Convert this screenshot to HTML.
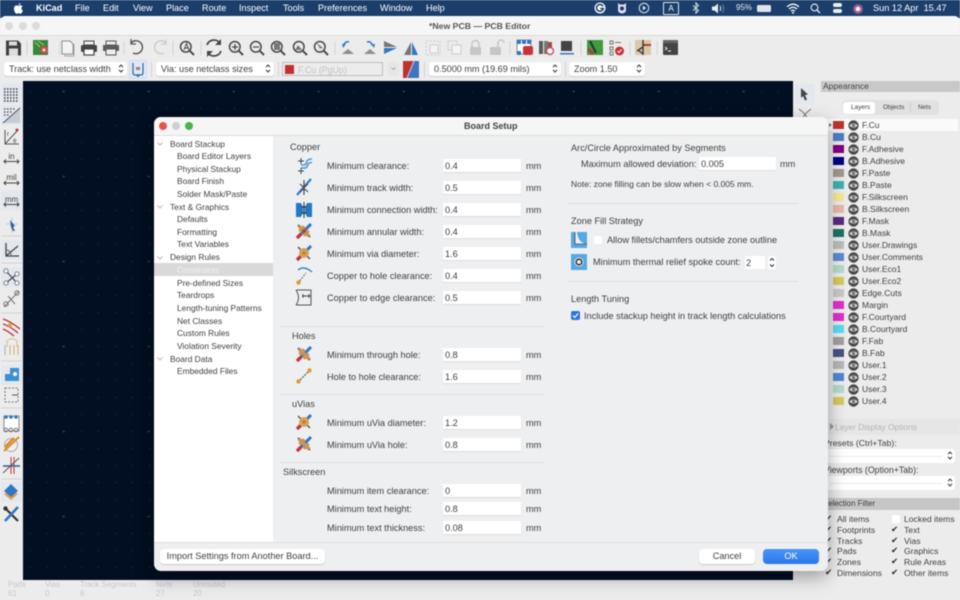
<!DOCTYPE html>
<html lang="en"><head><meta charset="utf-8"><title>KiCad Board Setup</title>
<style>
html,body{margin:0;padding:0;width:960px;height:600px;overflow:hidden;background:#ececec}
body{font-family:"Liberation Sans",sans-serif;color:#3f3f3f}
#w{position:absolute;left:0;top:0;width:960px;height:600px;overflow:hidden;filter:blur(.4px)}
.a{position:absolute}
.t{position:absolute;white-space:nowrap;font-size:9.2px;line-height:12px;height:12px}
.m{color:#fff;font-size:9.1px;top:1.5px}
.i{position:absolute;background:#fff;height:13px;width:78px;left:443px;font-size:9.2px;line-height:14px;text-indent:2px;box-shadow:0 1px 1px rgba(0,0,0,.08)}
.l{left:327px}.u{left:526px}
.h{font-size:9.2px}
.sep{position:absolute;height:1px;background:#dedede}
.tr{left:177px;font-size:8.4px}
.trh{left:170px;font-size:8.4px}
.chev{position:absolute;left:157px;width:6px;height:4px}
.cb{position:absolute;background:#fff;border-radius:3px;height:14px;top:62px;font-size:9.1px;line-height:14px;box-shadow:0 1px 1px rgba(0,0,0,.12)}
.sw{position:absolute;left:833px;width:11px;height:8px}
.eye{position:absolute;left:848px;width:11px;height:11px}
.ly{left:862px;font-size:8.5px}
.ck{position:absolute;font-size:9px;line-height:11px;color:#222}
.f{font-size:8.6px}
svg{position:absolute;overflow:visible}
</style></head><body><div id="w">
<svg width="0" height="0" style="position:absolute"><defs>
<symbol id="eye" viewBox="0 0 11 11"><circle cx="5.5" cy="5.5" r="5.2" fill="#4b4b4b"/><path d="M1.2 5.5Q5.5 1.4 9.800 5.5 5.500 9.600 1.200 5.500z" fill="#dcdcdc"/><circle cx="5.500" cy="5.500" r="1.500" fill="#666"/></symbol>
<symbol id="ud" viewBox="0 0 6 9"><path d="M1 3.200 3 1l2 2.200M1 5.800 3 8l2-2.200" fill="none" stroke="#333" stroke-width="1"/></symbol>
<symbol id="ch" viewBox="0 0 6 4"><path d="M.5.5 3 3 5.500.5" fill="none" stroke="#bbb" stroke-width="1"/></symbol>
<symbol id="zoom" viewBox="0 0 16 16"><circle cx="6.800" cy="6.800" r="5.300" fill="none" stroke="#4a4a4a" stroke-width="1.500"/><path d="M10.800 10.800 15 15" stroke="#4a4a4a" stroke-width="2"/></symbol>
<symbol id="cross" viewBox="0 0 16 16"><path d="M1 15 15 1" stroke="#2f78c4" stroke-width="3"/><path d="M1 15 5 11" stroke="#c8323a" stroke-width="3.400"/><path d="M2 2 14 14" stroke="#555" stroke-width="1.500"/><circle cx="8" cy="8" r="5" fill="#d8a058"/><circle cx="8" cy="8" r="1.800" fill="#b9803c"/></symbol>
<symbol id="cross2" viewBox="0 0 16 16"><path d="M1 15 15 1" stroke="#2f78c4" stroke-width="3"/><path d="M1 15 5 11" stroke="#c8323a" stroke-width="3.400"/><path d="M2 2 14 14" stroke="#555" stroke-width="1.800"/><path d="M3 3 13 13M3.500 8.500 8.500 3.500M7.500 12.500 12.500 7.500" stroke="#c8955a" stroke-width="3.500"/></symbol>
</defs></svg>

<!-- menu bar -->
<div class="a" style="left:0;top:0;width:960px;height:18px;background:#1b3e6b"></div>
<svg style="left:14px;top:3px" width="9" height="11" viewBox="0 0 9 11"><path d="M6.300 0C5.300.2 4.600 1 4.700 2.200 5.700 2.200 6.400 1.200 6.300 0zM4.500 2.800C3.800 2.800 3.200 2.300 2.500 2.400 1.100 2.500 0 3.700 0 5.700 0 8 1.500 10.800 2.800 10.800 3.500 10.800 3.800 10.300 4.600 10.300 5.400 10.300 5.600 10.800 6.300 10.800 7.500 10.800 8.500 8.800 8.900 7.600 7.100 6.800 7 4.300 8.600 3.400 7.900 2.500 6.900 2.300 6.300 2.400 5.500 2.400 5 2.800 4.500 2.800z" fill="#fff"/></svg>
<div class="t m" style="left:36px;font-weight:bold">KiCad</div>
<div class="t m" style="left:75px">File</div>
<div class="t m" style="left:103px">Edit</div>
<div class="t m" style="left:133px">View</div>
<div class="t m" style="left:166px">Place</div>
<div class="t m" style="left:202px">Route</div>
<div class="t m" style="left:239px">Inspect</div>
<div class="t m" style="left:283px">Tools</div>
<div class="t m" style="left:318px">Preferences</div>
<div class="t m" style="left:380px">Window</div>
<div class="t m" style="left:426px">Help</div>
<svg style="left:594px;top:2px" width="12" height="12" viewBox="0 0 12 12"><circle cx="6" cy="6" r="5.500" fill="#fff"/><path d="M9 4.300A3.400 3.400 0 1 0 9.300 6.500H6.300" fill="none" stroke="#1b3e6b" stroke-width="1.500"/></svg>
<svg style="left:617px;top:2px" width="10" height="12" viewBox="0 0 10 12"><path d="M1 1 3 2.500H7L9 1V8Q9 11 5 11.500 1 11 1 8z" fill="#dde"/><circle cx="5" cy="6.500" r="2" fill="#1b3e6b"/></svg>
<svg style="left:638px;top:2px" width="12" height="12" viewBox="0 0 12 12"><circle cx="6" cy="6" r="4.800" fill="none" stroke="#dfe6ee" stroke-width="1"/><path d="M4.800 3.800V8.200L8.200 6z" fill="#dfe6ee"/></svg>
<div class="a" style="left:663px;top:2px;width:14px;height:11px;border:1px solid #dfe6ee;color:#fff;font-size:8px;line-height:11px;text-align:center;border-radius:1px">A</div>
<svg style="left:692px;top:2px" width="8" height="12" viewBox="0 0 8 12"><path d="M1 3.500 6.500 8.500 4 11V1L6.500 3.500 1 8.500" fill="none" stroke="#cfd8e2" stroke-width="1.100"/></svg>
<svg style="left:712px;top:3px" width="14" height="11" viewBox="0 0 14 11"><path d="M0 3.500H2.500L6 .5V10.500L2.500 7.500H0z" fill="#e8edf2"/><path d="M8 3Q9.500 5.500 8 8" fill="none" stroke="#e8edf2"/><path d="M10.500 1.500Q13 5.500 10.500 9.500" fill="none" stroke="#6f88a6"/></svg>
<div class="t" style="left:736px;top:2px;color:#e8edf2;font-size:8px">95%</div>
<div class="a" style="left:757px;top:5px;width:14px;height:7px;background:#dfe5ec;border-radius:1.500px"></div>
<svg style="left:786px;top:3px" width="14" height="11" viewBox="0 0 14 11"><path d="M1 3.800Q7-1.500 13 3.800M3 6Q7 2.500 11 6M5 8Q7 6.500 9 8" fill="none" stroke="#fff" stroke-width="1.300"/><circle cx="7" cy="9.800" r="1" fill="#fff"/></svg>
<svg style="left:810px;top:3px" width="11" height="11" viewBox="0 0 11 11"><circle cx="4.500" cy="4.500" r="3.400" fill="none" stroke="#e8edf2" stroke-width="1.100"/><path d="M7 7 10 10" stroke="#e8edf2" stroke-width="1.300"/></svg>
<div class="a" style="left:833px;top:3px;width:9px;height:4px;background:#e8edf2;border-radius:2px"></div>
<div class="a" style="left:833px;top:9px;width:9px;height:4px;background:#e8edf2;border-radius:2px"></div>
<div class="a" style="left:853px;top:4px;width:10px;height:10px;border-radius:50%;background:radial-gradient(circle,#fff 20%,#b0457a 45%,#3f88a8 85%)"></div>
<div class="t m" style="left:873px;top:1.500px;font-size:9.200px">Sun 12 Apr&nbsp; 15.47</div>

<!-- window chrome -->
<div class="a" style="left:0;top:16px;width:960px;height:584px;background:#ececec;border-radius:6px 6px 0 0"></div>
<div class="a" style="left:0;top:16px;width:960px;height:19px;background:#f6f6f6;border-radius:6px 6px 0 0;border-bottom:1px solid #dcdcdc"></div>
<div class="a" style="left:5px;top:22px;width:8px;height:8px;border-radius:50%;background:#dcdcdc"></div>
<div class="a" style="left:19px;top:22px;width:8px;height:8px;border-radius:50%;background:#dcdcdc"></div>
<div class="a" style="left:32px;top:22px;width:8px;height:8px;border-radius:50%;background:#dcdcdc"></div>
<div class="t" style="left:429px;top:19.500px;font-size:8.700px;font-weight:bold;color:#555">*New PCB — PCB Editor</div>

<!-- toolbar -->
<svg style="left:0;top:36.500px" width="960" height="24" viewBox="0 36 960 24">
<path d="M6 39.500H18L21 42.500V54.500H6z" fill="#3f3f3f"/><rect x="9" y="40.500" width="8" height="4" fill="#ddd"/><rect x="9" y="47.500" width="9" height="7" fill="#ddd"/>
<path d="M27 40V54M60 40V54M124 40V54M173 40V54M201 40V54M335 40V54M510 40V54M581 40V54M630 40V54M657 40V54" stroke="#d4d4d4"/>
<rect x="33" y="39" width="15" height="15" fill="#35883c"/><circle cx="44" cy="49" r="4" fill="#c94b4b"/><circle cx="44" cy="49" r="1.500" fill="#eee"/><path d="M35 41 40 46M38 40 44 44" stroke="#a6cf5c"/>
<path d="M62 40H70L73 43V53H62z" fill="#f4f4f4" stroke="#8e8e8e"/><path d="M65 53V55H74V43" fill="none" stroke="#a5a5a5"/>
<rect x="84" y="40" width="10" height="4" fill="none" stroke="#444"/><rect x="81" y="44" width="16" height="7" rx="1.500" fill="#444"/><rect x="84" y="48" width="10" height="6" fill="#fff" stroke="#444" stroke-width="1.200"/>
<rect x="106" y="40" width="10" height="4" fill="none" stroke="#555"/><rect x="103" y="44" width="16" height="6" fill="#5c5c5c"/><rect x="106" y="48" width="10" height="6" fill="#eee" stroke="#555"/>
<path d="M131 42A6.500 6.500 0 1 1 133 52" fill="none" stroke="#555" stroke-width="1.400"/><path d="M131 38V43H136" fill="none" stroke="#555" stroke-width="1.300"/>
<path d="M166 42A6.500 6.500 0 1 0 164 52" fill="none" stroke="#ccc" stroke-width="1.400"/><path d="M166 38V43H161" fill="none" stroke="#ccc" stroke-width="1.300"/>
<use href="#zoom" x="179" y="39" width="16" height="16"/><path d="M184 49 186.500 42.500 189 49M185 47H188" stroke="#444" fill="none"/>
<path d="M207 44A7.500 7.500 0 0 1 220 42M221 50A7.500 7.500 0 0 1 208 52" fill="none" stroke="#444" stroke-width="1.700"/><path d="M221 38V44H215M207 56V50H213" fill="#444"/>
<use href="#zoom" x="228" y="39" width="16" height="16"/><path d="M232 46H238M235 43V49" stroke="#444" stroke-width="1.200"/>
<use href="#zoom" x="249" y="39" width="16" height="16"/><path d="M253 46H259" stroke="#444" stroke-width="1.200"/>
<use href="#zoom" x="270" y="39" width="16" height="16"/><rect x="274" y="42" width="6" height="7" fill="#777"/>
<use href="#zoom" x="292" y="39" width="16" height="16"/><path d="M295 49 298 44 302 49z" fill="#777"/>
<use href="#zoom" x="313" y="39" width="16" height="16"/><path d="M317 42 323 47 320 47.500 321 50z" fill="#777"/>
<path d="M342 53 354 53 348 48z" fill="#8f8f8f"/><path d="M344 44Q345 40 349 41" fill="none" stroke="#2f78c4" stroke-width="1.500"/><path d="M343 47 346 43 342 43z" fill="#2f78c4"/>
<path d="M364 53H376L370 48z" fill="#8f8f8f"/><path d="M372 44Q371 40 367 41" fill="none" stroke="#2f78c4" stroke-width="1.500"/><path d="M374 47 371 43 375 43z" fill="#2f78c4"/>
<path d="M384 40 397 46H384z" fill="#777"/><path d="M384 47H397L384 53z" fill="#2f78c4"/>
<path d="M411 41V54H404z" fill="#777"/><path d="M412 41V54H418z" fill="#2f78c4"/>
<rect x="426" y="40" width="14" height="14" fill="none" stroke="#ccc" stroke-dasharray="2 1.500"/><rect x="430" y="44" width="8" height="8" fill="#f4f4f4" stroke="#ccc"/>
<rect x="448" y="40" width="9" height="9" fill="none" stroke="#d0d0d0"/><rect x="452" y="44" width="9" height="9" fill="#f4f4f4" stroke="#ccc"/>
<rect x="470" y="46" width="11" height="8" rx="1" fill="#c6c6c6"/><path d="M472 46V43A3.500 3.500 0 0 1 479 43V46" fill="none" stroke="#c6c6c6" stroke-width="1.500"/>
<rect x="490" y="46" width="11" height="8" rx="1" fill="#c6c6c6"/><path d="M498 46V42A3 3 0 0 1 504 42" fill="none" stroke="#c6c6c6" stroke-width="1.500"/>
<rect x="517" y="39" width="14" height="14" fill="#fff" stroke="#8a8a8a"/><rect x="517" y="39" width="4" height="4" rx="1" fill="#2f78c4"/><rect x="522" y="39" width="4" height="4" rx="1" fill="#2f78c4"/><rect x="527" y="39" width="4" height="4" rx="1" fill="#2f78c4"/><rect x="517" y="50" width="4" height="4" rx="1" fill="#2f78c4"/><rect x="523" y="45" width="10" height="9" rx="2" fill="#c8323a"/>
<rect x="539" y="40" width="4" height="13" fill="#5a5a5a"/><rect x="544" y="40" width="4" height="13" fill="#777"/><rect x="548" y="41" width="4" height="12" fill="#a24a4f"/><circle cx="550" cy="50" r="3.500" fill="#f4f4f4" stroke="#c04050" stroke-width="1.200"/>
<rect x="561" y="40" width="11" height="10" fill="#444"/><rect x="560" y="52" width="14" height="1.500" fill="#2f78c4"/>
<rect x="587" y="39" width="16" height="15" fill="#3f9b3f"/><path d="M590 40 596 52" stroke="#333" stroke-width="2"/><path d="M588 48 593 53" stroke="#c03040" stroke-width="3"/>
<rect x="610" y="40" width="3" height="3" fill="none" stroke="#777"/><rect x="610" y="46" width="3" height="3" fill="none" stroke="#777"/><rect x="610" y="51" width="3" height="3" fill="none" stroke="#777"/><path d="M615 41.500H621" stroke="#777"/><circle cx="619.500" cy="50" r="4.500" fill="#c8323a"/><path d="M617.500 50 619 51.500 621.500 48.500" stroke="#fff" fill="none"/>
<rect x="635" y="39" width="16" height="15" fill="#d9c9a8"/><path d="M643 39V54M637 50 643 46M643 44H651M638 49 643 53" stroke="#3a3a3a" stroke-width="1.400"/><path d="M645 44H651" stroke="#c8323a" stroke-width="2"/>
<rect x="663" y="39" width="15" height="15" rx="1" fill="#444"/><rect x="663" y="39" width="15" height="3" fill="#666"/><path d="M665 46 667 47.500 665 49M668 50H671" stroke="#eee" fill="none"/>
</svg>

<!-- aux bar -->
<div class="a" style="left:0;top:60px;width:960px;height:21px;background:#ececec"></div>
<div class="cb" style="left:4px;width:123px;text-indent:5px">Track: use netclass width</div>
<svg style="left:118px;top:64px" width="6" height="9"><use href="#ud" width="6" height="9"/></svg>
<div class="a" style="left:129px;top:60px;width:18px;height:19px;background:#dfe9f5;border:1px solid #cfdcec;box-sizing:border-box"></div>
<svg style="left:131px;top:62px" width="14" height="16" viewBox="0 0 14 16"><path d="M2 1V11Q2 13 4 13H10Q12 13 12 11V1" fill="none" stroke="#3a6aa8" stroke-width="1.300"/><rect x="5" y="5" width="4" height="3" fill="#888"/><circle cx="7" cy="13.500" r="1.500" fill="#2f78c4"/></svg>
<div class="a" style="left:151px;top:62px;width:1px;height:15px;background:#d4d4d4"></div>
<div class="cb" style="left:156px;width:118px;text-indent:5px">Via: use netclass sizes</div>
<svg style="left:265px;top:64px" width="6" height="9"><use href="#ud" width="6" height="9"/></svg>
<div class="a" style="left:278px;top:62px;width:1px;height:15px;background:#d4d4d4"></div>
<div class="a" style="left:282px;top:62px;width:101px;height:14px;background:#ececec;border:1px solid #bdbdbd;box-sizing:border-box"></div>
<div class="a" style="left:285px;top:65px;width:9px;height:9px;background:#c0302f"></div>
<div class="t" style="left:298px;top:63.500px;color:#c2c2c2;font-size:8.900px">F.Cu (PgUp)</div>
<div class="a" style="left:388px;top:62px;width:11px;height:14px;background:#e6e6e6;border-radius:3px"></div>
<svg style="left:391px;top:67px" width="5" height="4"><path d="M.5.5 2.500 2.500 4.500.5" fill="none" stroke="#aaa"/></svg>
<svg style="left:403px;top:61px" width="16" height="17" viewBox="0 0 16 17"><rect width="16" height="17" fill="#3f73c4"/><path d="M0 0H11L4 17H0z" fill="#c0302f"/><path d="M11 0 4 17" stroke="#ccc" stroke-width="1"/></svg>
<div class="a" style="left:424px;top:62px;width:1px;height:15px;background:#d4d4d4"></div>
<div class="cb" style="left:429px;width:132px;text-indent:5px">0.5000 mm (19.69 mils)</div>
<svg style="left:552px;top:64px" width="6" height="9"><use href="#ud" width="6" height="9"/></svg>
<div class="a" style="left:565px;top:62px;width:1px;height:15px;background:#d4d4d4"></div>
<div class="cb" style="left:569px;width:76px;text-indent:5px">Zoom 1.50</div>
<svg style="left:636px;top:64px" width="6" height="9"><use href="#ud" width="6" height="9"/></svg>

<!-- canvas -->
<div class="a" style="left:23px;top:81px;width:770px;height:499px;background-color:#020e21;background-image:radial-gradient(circle,#33465e .7px,transparent 1px),radial-gradient(circle,#1a2a40 .6px,transparent .9px);background-size:85px 85px,17px 17px;background-position:-2px -32px,-1px 2px"></div>

<!-- left toolbar -->
<svg style="left:0;top:81px" width="23" height="499" viewBox="0 81 23 499">
<rect x="1" y="83" width="21" height="20" fill="#e3e8ef"/>
<path d="M4 89H19M4 92H19M4 95H19M4 98H19M4 101H19" stroke="#3a3a3a" stroke-width="1.400" stroke-dasharray="1.500 1.500"/>
<rect x="1" y="105" width="21" height="20" fill="#e3e8ef"/>
<path d="M4 109H16M4 112H13M4 115H9" stroke="#444" stroke-width="1.300" stroke-dasharray="1.500 1.500"/><path d="M3 123 20 108V123z" fill="#c6ccd4"/><path d="M3 123 20 108" stroke="#555"/>
<path d="M5 130V144H19" fill="none" stroke="#555"/><path d="M5 144 17 131" stroke="#555"/><circle cx="17" cy="130" r="1.500" fill="#c8323a"/>
<text x="7" y="136" font-family="Liberation Sans" font-size="6" fill="#444">r</text><text x="13" y="143" font-family="Liberation Sans" font-size="6" fill="#444">θ</text>
<text x="11.500" y="159" text-anchor="middle" font-family="Liberation Sans" font-size="8" fill="#444">in</text>
<path d="M4 161.500H19M6 159.500 4 161.500 6 163.500M17 159.500 19 161.500 17 163.500" fill="none" stroke="#444"/>
<text x="11.500" y="180" text-anchor="middle" font-family="Liberation Sans" font-size="8" fill="#444">mil</text>
<path d="M4 183H19M6 181 4 183 6 185M17 181 19 183 17 185" fill="none" stroke="#444"/>
<rect x="1" y="190" width="21" height="20" fill="#e3e8ef"/>
<text x="11.500" y="202" text-anchor="middle" font-family="Liberation Sans" font-size="8" fill="#444">mm</text>
<path d="M4 204.500H19M6 202.500 4 204.500 6 206.500M17 202.500 19 204.500 17 206.500" fill="none" stroke="#444"/>
<path d="M12 217V233M6 224H18" stroke="#c9d7e6" stroke-width="1.500"/><path d="M10 220 15 226 13 227 15 231 13 231 11 227z" fill="#2f5f96"/>
<path d="M1 236H22" stroke="#d2d2d2"/>
<rect x="1" y="240" width="21" height="20" fill="#e3e8ef"/>
<path d="M6 243V256H19M6 256 18 246" fill="none" stroke="#444" stroke-width="1.300"/><path d="M6 250Q11 250 11 256" fill="none" stroke="#666"/>
<path d="M1 263H22" stroke="#d2d2d2"/>
<rect x="1" y="267" width="21" height="20" fill="#e3e8ef"/>
<path d="M6 271 17 283M6 283 17 274" stroke="#445" stroke-width="1.200"/><circle cx="6" cy="271" r="2.200" fill="#eef" stroke="#555" stroke-width=".7"/><circle cx="17" cy="274" r="2.200" fill="#eef" stroke="#555" stroke-width=".7"/><circle cx="6" cy="283" r="2.200" fill="#eef" stroke="#555" stroke-width=".7"/><circle cx="17" cy="283" r="2.200" fill="#eef" stroke="#555" stroke-width=".7"/>
<path d="M4 307 19 291" stroke="#777" stroke-width="1"/><circle cx="6" cy="304" r="2.200" fill="none" stroke="#777"/><circle cx="17" cy="293" r="2.200" fill="none" stroke="#777"/><path d="M8 296 15 304" stroke="#777"/>
<path d="M1 313H22" stroke="#d2d2d2"/>
<path d="M3 319Q10 321 20 329M3 324Q10 326 18 333M3 329Q8 331 14 336" fill="none" stroke="#b33a3a" stroke-width="1.400"/><circle cx="10" cy="325" r="2" fill="#e2a83c"/>
<path d="M7 347V341A7 7 0 0 1 17 341V347" fill="none" stroke="#d5c48a"/><path d="M10 355V345M14 355V345M18 355V345" stroke="#d5b070"/><path d="M5 355V345" stroke="#8cb3db"/>
<path d="M1 361H22" stroke="#d2d2d2"/>
<rect x="1" y="365" width="21" height="20" fill="#e3e8ef"/>
<path d="M5 381V374H10V368H19V381z" fill="#3d8fd3"/><circle cx="15" cy="374" r="2" fill="#fff"/>
<rect x="5" y="388" width="13" height="14" fill="none" stroke="#777" stroke-dasharray="2 1.500"/><path d="M12 395H18" stroke="#555"/>
<path d="M1 408H22" stroke="#d2d2d2"/>
<rect x="4" y="416" width="15" height="15" fill="#fff" stroke="#888"/><circle cx="6" cy="417" r="1.800" fill="#2f78c4"/><circle cx="11" cy="417" r="1.800" fill="#2f78c4"/><circle cx="16" cy="417" r="1.800" fill="#2f78c4"/><circle cx="6" cy="430" r="1.800" fill="none" stroke="#777"/><circle cx="11" cy="430" r="1.800" fill="none" stroke="#777"/><circle cx="16" cy="430" r="1.800" fill="none" stroke="#777"/>
<circle cx="11" cy="445" r="6.500" fill="#eee" stroke="#aaa"/><path d="M4 451 19 437" stroke="#d98d2e" stroke-width="2"/><path d="M5 447 14 438" stroke="#d98d2e" stroke-width="2.500"/>
<path d="M11 457V474M14 457V474" stroke="#c8323a"/><path d="M3 466H20" stroke="#2f5f96" stroke-width="1.400"/><path d="M3 473 19 458" stroke="#555"/>
<path d="M1 479H22" stroke="#d2d2d2"/>
<rect x="1" y="482" width="21" height="20" fill="#e3e8ef"/>
<path d="M11 490 18 494 11 500 4 494z" fill="#e0a040"/><path d="M11 484 18 491 11 497 4 491z" fill="#2f78c4"/>
<path d="M5 508 18 521" stroke="#333" stroke-width="2.200"/><circle cx="5.500" cy="508.500" r="2.200" fill="#333"/><path d="M18 507 5 521" stroke="#2f78c4" stroke-width="2.600"/>
</svg>

<!-- right toolbar -->
<div class="a" style="left:795px;top:84px;width:20px;height:20px;background:#e3e8ef"></div>
<svg style="left:800px;top:87px" width="10" height="14" viewBox="0 0 10 14"><path d="M1 1 8 7.500 5 8 7 12.500 5 13.500 3 9 1 11z" fill="#444"/></svg>
<svg style="left:798px;top:108px" width="14" height="10" viewBox="0 0 14 10"><path d="M1 1 7 6 13 1M7 6 5 10M7 6 9 10" fill="none" stroke="#777"/></svg>

<!-- appearance panel -->
<div class="a" style="left:821px;top:81px;width:139px;height:11px;background:#c8c8c8"></div>
<div class="t" style="left:823px;top:80px;font-size:8.500px;color:#444">Appearance</div>
<div class="a" style="left:842px;top:100px;width:97px;height:15px;background:#e1e1e1;border-radius:4px"></div>
<div class="a" style="left:843px;top:101.500px;width:32px;height:12.500px;background:#fff;border-radius:3px"></div>
<div class="t" style="left:851px;top:101.500px;font-size:6.400px">Layers</div>
<div class="t" style="left:883px;top:101.500px;font-size:6.300px">Objects</div>
<div class="t" style="left:918px;top:101.500px;font-size:6.300px">Nets</div>
<div class="a" style="left:910px;top:103px;width:1px;height:9px;background:#cfcfcf"></div>
<div class="a" style="left:826px;top:119px;width:132px;height:12px;background:#fafafa"></div>
<svg style="left:829px;top:123px" width="3" height="4"><path d="M0 0 3 2 0 4z" fill="#777"/></svg>

<div class="sw" style="top:121px;background:#c0342f"></div><svg class="eye" style="top:120px"><use href="#eye" width="11" height="11"/></svg><div class="t ly" style="top:119px">F.Cu</div>
<div class="sw" style="top:133px;background:#4d7fc4"></div><svg class="eye" style="top:132px"><use href="#eye" width="11" height="11"/></svg><div class="t ly" style="top:131px">B.Cu</div>
<div class="sw" style="top:145px;background:#840084"></div><svg class="eye" style="top:144px"><use href="#eye" width="11" height="11"/></svg><div class="t ly" style="top:143px">F.Adhesive</div>
<div class="sw" style="top:157px;background:#000084"></div><svg class="eye" style="top:156px"><use href="#eye" width="11" height="11"/></svg><div class="t ly" style="top:155px">B.Adhesive</div>
<div class="sw" style="top:169px;background:#a2988e"></div><svg class="eye" style="top:168px"><use href="#eye" width="11" height="11"/></svg><div class="t ly" style="top:167px">F.Paste</div>
<div class="sw" style="top:181px;background:#3fb0ae"></div><svg class="eye" style="top:180px"><use href="#eye" width="11" height="11"/></svg><div class="t ly" style="top:179px">B.Paste</div>
<div class="sw" style="top:193px;background:#f2ea90"></div><svg class="eye" style="top:192px"><use href="#eye" width="11" height="11"/></svg><div class="t ly" style="top:191px">F.Silkscreen</div>
<div class="sw" style="top:205px;background:#e8b8ac"></div><svg class="eye" style="top:204px"><use href="#eye" width="11" height="11"/></svg><div class="t ly" style="top:203px">B.Silkscreen</div>
<div class="sw" style="top:217px;background:#582c80"></div><svg class="eye" style="top:216px"><use href="#eye" width="11" height="11"/></svg><div class="t ly" style="top:215px">F.Mask</div>
<div class="sw" style="top:229px;background:#1d7262"></div><svg class="eye" style="top:228px"><use href="#eye" width="11" height="11"/></svg><div class="t ly" style="top:227px">B.Mask</div>
<div class="sw" style="top:241px;background:#bcbcbc"></div><svg class="eye" style="top:240px"><use href="#eye" width="11" height="11"/></svg><div class="t ly" style="top:239px">User.Drawings</div>
<div class="sw" style="top:253px;background:#5b8ad0"></div><svg class="eye" style="top:252px"><use href="#eye" width="11" height="11"/></svg><div class="t ly" style="top:251px">User.Comments</div>
<div class="sw" style="top:265px;background:#b4dccd"></div><svg class="eye" style="top:264px"><use href="#eye" width="11" height="11"/></svg><div class="t ly" style="top:263px">User.Eco1</div>
<div class="sw" style="top:277px;background:#d6c95e"></div><svg class="eye" style="top:276px"><use href="#eye" width="11" height="11"/></svg><div class="t ly" style="top:275px">User.Eco2</div>
<div class="sw" style="top:289px;background:#c8cac8"></div><svg class="eye" style="top:288px"><use href="#eye" width="11" height="11"/></svg><div class="t ly" style="top:287px">Edge.Cuts</div>
<div class="sw" style="top:301px;background:#e030cc"></div><svg class="eye" style="top:300px"><use href="#eye" width="11" height="11"/></svg><div class="t ly" style="top:299px">Margin</div>
<div class="sw" style="top:313px;background:#e030cc"></div><svg class="eye" style="top:312px"><use href="#eye" width="11" height="11"/></svg><div class="t ly" style="top:311px">F.Courtyard</div>
<div class="sw" style="top:325px;background:#58dcf0"></div><svg class="eye" style="top:324px"><use href="#eye" width="11" height="11"/></svg><div class="t ly" style="top:323px">B.Courtyard</div>
<div class="sw" style="top:337px;background:#a0a0a0"></div><svg class="eye" style="top:336px"><use href="#eye" width="11" height="11"/></svg><div class="t ly" style="top:335px">F.Fab</div>
<div class="sw" style="top:349px;background:#475280"></div><svg class="eye" style="top:348px"><use href="#eye" width="11" height="11"/></svg><div class="t ly" style="top:347px">B.Fab</div>
<div class="sw" style="top:361px;background:#b6b6b6"></div><svg class="eye" style="top:360px"><use href="#eye" width="11" height="11"/></svg><div class="t ly" style="top:359px">User.1</div>
<div class="sw" style="top:373px;background:#5085d4"></div><svg class="eye" style="top:372px"><use href="#eye" width="11" height="11"/></svg><div class="t ly" style="top:371px">User.2</div>
<div class="sw" style="top:385px;background:#b4dccd"></div><svg class="eye" style="top:384px"><use href="#eye" width="11" height="11"/></svg><div class="t ly" style="top:383px">User.3</div>
<div class="sw" style="top:397px;background:#d6c95e"></div><svg class="eye" style="top:396px"><use href="#eye" width="11" height="11"/></svg><div class="t ly" style="top:395px">User.4</div>

<div class="a" style="left:826px;top:419px;width:134px;height:16px;background:#e6e6e6"></div>
<svg style="left:830px;top:423px" width="4" height="7"><path d="M0 0 4 3.500 0 7z" fill="#999"/></svg>
<div class="t" style="left:835px;top:421px;font-size:8.400px;color:#b4b4b4">Layer Display Options</div>
<div class="t" style="left:824px;top:437px;font-size:8.700px">Presets (Ctrl+Tab):</div>
<div class="a" style="left:826px;top:449px;width:129px;height:13.500px;background:#fff;border-radius:3px"></div>
<div class="a" style="left:830px;top:456px;width:112px;height:1px;background:#eaeaea"></div>
<svg style="left:947px;top:451px" width="6" height="9"><use href="#ud" width="6" height="9"/></svg>
<div class="t" style="left:824px;top:464px;font-size:8.800px">Viewports (Option+Tab):</div>
<div class="a" style="left:826px;top:476px;width:129px;height:13.500px;background:#fff;border-radius:3px"></div>
<div class="a" style="left:830px;top:483px;width:112px;height:1px;background:#eaeaea"></div>
<svg style="left:947px;top:478px" width="6" height="9"><use href="#ud" width="6" height="9"/></svg>
<div class="a" style="left:820px;top:498px;width:140px;height:11.500px;background:#c6c6c6"></div>
<div class="t" style="left:823px;top:498px;font-size:7.900px">Selection Filter</div>

<div class="ck f" style="left:825px;top:513px">✔</div><div class="t f" style="left:837px;top:513px">All items</div>
<div class="ck f" style="left:825px;top:523.500px">✔</div><div class="t f" style="left:837px;top:523.500px">Footprints</div>
<div class="ck f" style="left:825px;top:534.500px">✔</div><div class="t f" style="left:837px;top:534.500px">Tracks</div>
<div class="ck f" style="left:825px;top:545px">✔</div><div class="t f" style="left:837px;top:545px">Pads</div>
<div class="ck f" style="left:825px;top:555.500px">✔</div><div class="t f" style="left:837px;top:555.500px">Zones</div>
<div class="ck f" style="left:825px;top:566.500px">✔</div><div class="t f" style="left:837px;top:566.500px">Dimensions</div>
<div class="a" style="left:892px;top:515px;width:8px;height:8px;background:#fff;border-radius:2px"></div><div class="t f" style="left:904px;top:513px">Locked items</div>
<div class="ck f" style="left:891px;top:523.500px">✔</div><div class="t f" style="left:904px;top:523.500px">Text</div>
<div class="ck f" style="left:891px;top:534.500px">✔</div><div class="t f" style="left:904px;top:534.500px">Vias</div>
<div class="ck f" style="left:891px;top:545px">✔</div><div class="t f" style="left:904px;top:545px">Graphics</div>
<div class="ck f" style="left:891px;top:555.500px">✔</div><div class="t f" style="left:904px;top:555.500px">Rule Areas</div>
<div class="ck f" style="left:891px;top:566.500px">✔</div><div class="t f" style="left:904px;top:566.500px">Other items</div>

<!-- status bar -->
<div class="t" style="left:8px;top:579px;font-size:7.800px;color:#c8c8c8">Pads</div><div class="t" style="left:8px;top:588px;font-size:7.800px;color:#c8c8c8">61</div>
<div class="t" style="left:45px;top:579px;font-size:7.800px;color:#c8c8c8">Vias</div><div class="t" style="left:45px;top:588px;font-size:7.800px;color:#c8c8c8">0</div>
<div class="t" style="left:80px;top:579px;font-size:7.800px;color:#c8c8c8">Track Segments</div><div class="t" style="left:80px;top:588px;font-size:7.800px;color:#c8c8c8">6</div>
<div class="t" style="left:156px;top:579px;font-size:7.800px;color:#c8c8c8">Nets</div><div class="t" style="left:156px;top:588px;font-size:7.800px;color:#c8c8c8">27</div>
<div class="t" style="left:193px;top:579px;font-size:7.800px;color:#c8c8c8">Unrouted</div><div class="t" style="left:193px;top:588px;font-size:7.800px;color:#c8c8c8">20</div>

<!-- dialog -->
<div class="a" style="left:154px;top:117px;width:674px;height:454px;background:#eeeff0;border-radius:7px;box-shadow:0 6px 18px rgba(0,0,0,.35)"></div>
<div class="a" style="left:154px;top:117px;width:674px;height:18px;background:#f6f6f6;border-radius:7px 7px 0 0;border-bottom:1px solid #dedede"></div>
<div class="a" style="left:159px;top:122px;width:8px;height:8px;border-radius:50%;background:#e9524a"></div>
<div class="a" style="left:172px;top:122px;width:8px;height:8px;border-radius:50%;background:#cfcfcf"></div>
<div class="a" style="left:185px;top:122px;width:8px;height:8px;border-radius:50%;background:#44b649"></div>
<div class="t" style="left:464px;top:120px;font-size:9px;font-weight:bold;color:#444">Board Setup</div>
<div class="a" style="left:154px;top:136px;width:119px;height:406px;background:#fff"></div>
<div class="a" style="left:154px;top:263px;width:119px;height:13px;background:#d9d9d9"></div>
<div class="a" style="left:154px;top:542px;width:674px;height:1px;background:#dedede"></div>

<svg class="chev" style="top:142px"><use href="#ch" width="6" height="4"/></svg>
<svg class="chev" style="top:205px"><use href="#ch" width="6" height="4"/></svg>
<svg class="chev" style="top:256px"><use href="#ch" width="6" height="4"/></svg>
<svg class="chev" style="top:357px"><use href="#ch" width="6" height="4"/></svg>
<div class="t trh" style="top:137.500px">Board Stackup</div>
<div class="t tr" style="top:150px">Board Editor Layers</div>
<div class="t tr" style="top:163px">Physical Stackup</div>
<div class="t tr" style="top:175px">Board Finish</div>
<div class="t tr" style="top:188px">Solder Mask/Paste</div>
<div class="t trh" style="top:201px">Text &amp; Graphics</div>
<div class="t tr" style="top:213px">Defaults</div>
<div class="t tr" style="top:226px">Formatting</div>
<div class="t tr" style="top:238px">Text Variables</div>
<div class="t trh" style="top:251px">Design Rules</div>
<div class="t tr" style="top:264px;color:#f2f2f2">Constraints</div>
<div class="t tr" style="top:277px">Pre-defined Sizes</div>
<div class="t tr" style="top:289px">Teardrops</div>
<div class="t tr" style="top:302px">Length-tuning Patterns</div>
<div class="t tr" style="top:315px">Net Classes</div>
<div class="t tr" style="top:327px">Custom Rules</div>
<div class="t tr" style="top:340px">Violation Severity</div>
<div class="t trh" style="top:353px">Board Data</div>
<div class="t tr" style="top:365px">Embedded Files</div>

<!-- constraints -->
<div class="t h" style="left:290px;top:141px">Copper</div>
<div class="t l" style="top:159.500px">Minimum clearance:</div><div class="i" style="top:159px">0.4</div><div class="t u" style="top:160px">mm</div>
<div class="t l" style="top:181.500px">Minimum track width:</div><div class="i" style="top:181px">0.5</div><div class="t u" style="top:182px">mm</div>
<div class="t l" style="top:204px">Minimum connection width:</div><div class="i" style="top:203px">0.4</div><div class="t u" style="top:204px">mm</div>
<div class="t l" style="top:226px">Minimum annular width:</div><div class="i" style="top:225px">0.4</div><div class="t u" style="top:226px">mm</div>
<div class="t l" style="top:248px">Minimum via diameter:</div><div class="i" style="top:247px">1.6</div><div class="t u" style="top:248px">mm</div>
<div class="t l" style="top:270px">Copper to hole clearance:</div><div class="i" style="top:269px">0.4</div><div class="t u" style="top:270px">mm</div>
<div class="t l" style="top:292px">Copper to edge clearance:</div><div class="i" style="top:291px">0.5</div><div class="t u" style="top:292px">mm</div>
<div class="sep" style="left:280px;top:326px;width:263px"></div>
<div class="t h" style="left:292px;top:330px">Holes</div>
<div class="t l" style="top:348.500px">Minimum through hole:</div><div class="i" style="top:348px">0.8</div><div class="t u" style="top:349px">mm</div>
<div class="t l" style="top:370.500px">Hole to hole clearance:</div><div class="i" style="top:370px">1.6</div><div class="t u" style="top:371px">mm</div>
<div class="sep" style="left:280px;top:394px;width:263px"></div>
<div class="t h" style="left:292px;top:398px">uVias</div>
<div class="t l" style="top:417px">Minimum uVia diameter:</div><div class="i" style="top:416px">1.2</div><div class="t u" style="top:417px">mm</div>
<div class="t l" style="top:439px">Minimum uVia hole:</div><div class="i" style="top:438px">0.8</div><div class="t u" style="top:439px">mm</div>
<div class="sep" style="left:280px;top:462px;width:263px"></div>
<div class="t h" style="left:283px;top:465.500px">Silkscreen</div>
<div class="t l" style="top:485px">Minimum item clearance:</div><div class="i" style="top:484px">0</div><div class="t u" style="top:485px">mm</div>
<div class="t l" style="top:503px">Minimum text height:</div><div class="i" style="top:502px">0.8</div><div class="t u" style="top:503px">mm</div>
<div class="t l" style="top:522px">Minimum text thickness:</div><div class="i" style="top:521px">0.08</div><div class="t u" style="top:522px">mm</div>

<!-- constraint icons -->
<svg style="left:296px;top:157px" width="16" height="150" viewBox="0 0 16 150">
<path d="M5 8H8Q10 8 11 4 12 2 16 2M5 11H9Q11 11 12 7 13 5.500 16 5.500" fill="none" stroke="#4f9ad6" stroke-width="1.600"/><path d="M5 1V7M2 4H8M5 11V17M2 14H8" stroke="#444" stroke-width="1"/>
<path d="M1 38 15 22" stroke="#3f7fc8" stroke-width="2.400"/><path d="M8 23V38M4 27 8 30.500 12 27M4 35 8 31.500 12 35" fill="none" stroke="#444" stroke-width="1.100"/>
<path d="M0 46H5L7 51V55L5 60H0zM16 46H11L9 51V55L11 60H16z" fill="#1f78c8"/><path d="M8 45V61M6 49 8 51 10 49M6 57 8 55 10 57" fill="none" stroke="#333"/>
<use href="#cross2" x="0" y="66" width="16" height="16"/><circle cx="8" cy="74" r="2" fill="#b04535"/>
<use href="#cross" x="0" y="88" width="16" height="16"/>
<path d="M2 113Q8 108 16 115" fill="none" stroke="#2f78c4" stroke-width="1.300"/><path d="M2 126 10 116" stroke="#444" stroke-dasharray="1.500 1.500"/><circle cx="2.500" cy="125.500" r="2.200" fill="#dd9a30"/>
<path d="M0 133H15V148H0M0 133Q5 141 0 148" fill="none" stroke="#555"/><path d="M6 139H15M7 137V141M13 137V141" stroke="#444" stroke-width=".9"/>
</svg>
<svg style="left:296px;top:346px" width="16" height="16"><use href="#cross2" width="16" height="16"/></svg>
<svg style="left:296px;top:368px" width="16" height="16" viewBox="0 0 16 16"><path d="M2 14 14 2" stroke="#444" stroke-dasharray="2 1"/><circle cx="2.500" cy="13.500" r="2.200" fill="#dd9a30"/><circle cx="13.500" cy="2.500" r="2.200" fill="#dd9a30"/></svg>
<svg style="left:296px;top:414px" width="16" height="16"><use href="#cross" width="16" height="16"/></svg>
<svg style="left:296px;top:436px" width="16" height="16"><use href="#cross2" width="16" height="16"/></svg>

<!-- right column -->
<div class="t h" style="left:571px;top:141.500px">Arc/Circle Approximated by Segments</div>
<div class="t" style="left:581px;top:157.500px">Maximum allowed deviation:</div>
<div class="i" style="left:699px;width:77px;top:157px">0.005</div>
<div class="t" style="left:780px;top:157.500px">mm</div>
<div class="t" style="left:571px;top:177.500px;font-size:8.500px">Note: zone filling can be slow when &lt; 0.005 mm.</div>
<div class="sep" style="left:568px;top:203px;width:230px"></div>
<div class="t h" style="left:571px;top:215px">Zone Fill Strategy</div>
<svg style="left:571px;top:232px" width="16" height="16" viewBox="0 0 16 16"><rect width="16" height="16" fill="#55a8e4"/><path d="M4 0V12H16Q7 11 6 0z" fill="#f0f0f0"/><path d="M4 0V12H16" fill="none" stroke="#3a4a5a" stroke-width=".8"/></svg>
<div class="a" style="left:594px;top:236px;width:8px;height:8px;background:#fff;border-radius:2px"></div>
<div class="t" style="left:607px;top:233.500px">Allow fillets/chamfers outside zone outline</div>
<svg style="left:571px;top:254px" width="16" height="16" viewBox="0 0 16 16"><rect width="16" height="16" fill="#55a8e4"/><circle cx="8" cy="8" r="4.500" fill="#f2f2f2"/><circle cx="8" cy="8" r="2.800" fill="none" stroke="#333" stroke-width="1.600"/></svg>
<div class="t" style="left:593px;top:256px">Minimum thermal relief spoke count:</div>
<div class="a" style="left:745px;top:255.500px;width:20px;height:13px;background:#fff;font-size:9.200px;line-height:14px;text-indent:1px">2</div>
<svg style="left:768px;top:255.500px" width="8" height="13" viewBox="0 0 8 13"><rect width="8" height="13" rx="2" fill="#fff"/><path d="M2 4.500 4 2.500 6 4.500M2 8.500 4 10.500 6 8.500" fill="none" stroke="#333"/></svg>
<div class="sep" style="left:568px;top:281px;width:230px"></div>
<div class="t h" style="left:571px;top:293px">Length Tuning</div>
<svg style="left:571px;top:311px" width="9" height="9" viewBox="0 0 9 9"><rect width="9" height="9" rx="2" fill="#2d74e2"/><path d="M2 4.500 3.800 6.500 7 2.500" fill="none" stroke="#fff" stroke-width="1.200"/></svg>
<div class="t" style="left:584px;top:310px">Include stackup height in track length calculations</div>

<!-- buttons -->
<div class="a" style="left:160px;top:549px;width:165px;height:15px;background:#fff;border-radius:4px;font-size:9.200px;line-height:15px;text-align:center;box-shadow:0 1px 1px rgba(0,0,0,.15)">Import Settings from Another Board...</div>
<div class="a" style="left:699px;top:549px;width:56px;height:15px;background:#fff;border-radius:4px;font-size:9.200px;line-height:15px;text-align:center;box-shadow:0 1px 1px rgba(0,0,0,.15)">Cancel</div>
<div class="a" style="left:763px;top:549px;width:56px;height:15px;background:linear-gradient(#4a95f7,#2a78ee);border-radius:4px;font-size:9.200px;line-height:15px;text-align:center;color:#fff">OK</div>
</div></body></html>
